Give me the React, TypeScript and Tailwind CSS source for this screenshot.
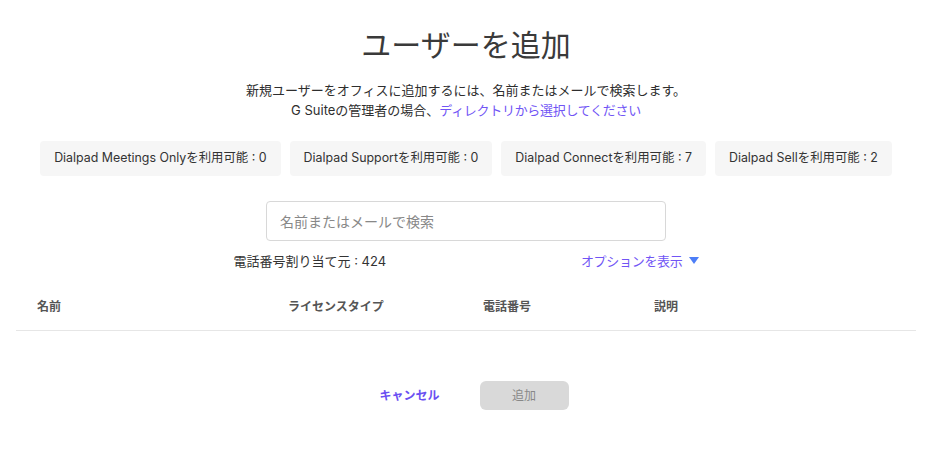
import React from "react";

const chips = [
  "Dialpad Meetings Onlyを利用可能 : 0",
  "Dialpad Supportを利用可能 : 0",
  "Dialpad Connectを利用可能 : 7",
  "Dialpad Sellを利用可能 : 2",
];

export default function App() {
  return (
    <div
      className="w-[932px] h-[449px] bg-white flex flex-col items-center text-[#333]"
      style={{ fontFamily: '"Inter", "Noto Sans CJK JP", sans-serif' }}
    >
      <h1 className="mt-[26px] text-[30px] leading-[38px] text-[#3a3a3a] font-normal">ユーザーを追加</h1>
      <div className="mt-[16px] text-[13px] leading-[20px] text-center text-[#2e2e2e]">
        <p>新規ユーザーをオフィスに追加するには、名前またはメールで検索します。</p>
        <p>
          G Suiteの管理者の場合、<span className="text-[#7155f5] tracking-[-0.3px]">ディレクトリから選択してください</span>
        </p>
      </div>
      <div className="mt-[21px] flex gap-[9px]">
        {chips.map((c) => (
          <div
            key={c}
            className="h-[35px] px-[14px] flex items-center rounded-[4px] bg-[#f6f6f6] text-[12.4px] text-[#333]"
          >
            {c}
          </div>
        ))}
      </div>
      <div className="mt-[25px] w-[400px] h-[40px] border border-[#d8d8d8] rounded-[4px] flex items-center px-[13px] text-[14px] text-[#888]">
        名前またはメールで検索
      </div>
      <div className="mt-[10px] w-[465px] flex justify-between items-center text-[13px] leading-[20px]">
        <span className="text-[#333]">電話番号割り当て元 : 424</span>
        <span className="flex items-center gap-[6px] text-[#7155f5] tracking-[-0.3px]">
          オプションを表示
          <svg width="10" height="8" viewBox="0 0 10 8">
            <path d="M0 0 L10 0 L5 7 Z" fill="#4d7ef7" />
          </svg>
        </span>
      </div>
      <div className="mt-[27px] w-[900px] grid grid-cols-[251px_195px_171px_1fr] pl-[21px] text-[12px] font-bold text-[#555] leading-[18px] pb-[14px] border-b border-[#e6e6e6]">
        <span>名前</span>
        <span>ライセンスタイプ</span>
        <span>電話番号</span>
        <span>説明</span>
      </div>
      <div className="mt-[50px] ml-[16px] flex items-center gap-[40px]">
        <span className="text-[12px] font-bold text-[#6a4ff2]">キャンセル</span>
        <div className="w-[89px] h-[29px] rounded-[6px] bg-[#d9d9d9] flex items-center justify-center text-[12px] text-[#888]">
          追加
        </div>
      </div>
    </div>
  );
}
